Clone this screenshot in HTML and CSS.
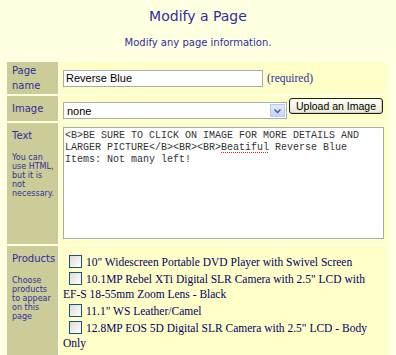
FILE: index.html
```html
<!DOCTYPE html>
<html>
<head>
<meta charset="utf-8">
<link rel="stylesheet" href="styles.css">
</head>
<body>
<h1 class="title">Modify a Page</h1>
<p class="subtitle">Modify any page information.</p>
<div class="form">
  <div class="label label-mid"><span class="lbl">Page name</span></div>
  <div class="cell row-name">
    <input class="text-input" type="text" value="Reverse Blue">
    <span class="req">(required)</span>
  </div>

  <div class="label label-mid"><span class="lbl">Image</span></div>
  <div class="cell row-image">
    <div class="select"><span class="select-val">none</span><span class="select-btn"><svg width="9" height="6" viewBox="0 0 9 6"><path d="M1.5 1.5 L4.5 4.5 L7.5 1.5" fill="none" stroke="#4d6185" stroke-width="1.5"/></svg></span></div>
    <button class="upload">Upload an Image</button>
  </div>

  <div class="label"><span class="lbl">Text</span><span class="help">You can use HTML, but it is not necessary.</span></div>
  <div class="cell row-text">
    <div class="textarea">&lt;B&gt;BE SURE TO CLICK ON IMAGE FOR MORE DETAILS AND LARGER PICTURE&lt;/B&gt;&lt;BR&gt;&lt;BR&gt;<span class="spell">Beatiful</span> Reverse Blue Items: Not many left!</div>
  </div>

  <div class="label"><span class="lbl">Products</span><span class="help">Choose products to appear on this page</span></div>
  <div class="cell row-products">
    <label class="item"><span class="cb"></span>10" Widescreen Portable DVD Player with Swivel Screen</label>
    <label class="item"><span class="cb"></span>10.1MP Rebel XTi Digital SLR Camera with 2.5" LCD with <span class="nw">EF-S</span> 18-55mm Zoom Lens - Black</label>
    <label class="item"><span class="cb"></span>11.1" WS Leather/Camel</label>
    <label class="item"><span class="cb"></span>12.8MP EOS 5D Digital SLR Camera with 2.5" LCD - Body Only</label>
  </div>
</div>
</body>
</html>
```
FILE: styles.css
```css
html, body {
  margin: 0;
  padding: 0;
  background: #ffffe2;
  overflow: hidden;
}
body {
  font-family: Verdana, "DejaVu Sans", sans-serif;
  color: #333399;
}
.title {
  margin: 0;
  padding-top: 8px;
  height: 20px;
  font-size: 14px;
  font-weight: normal;
  text-align: center;
  color: #2e2e9e;
}
.subtitle {
  margin: 0;
  padding-top: 9px;
  height: 25px;
  font-size: 10px;
  text-align: center;
  color: #2e2e9e;
}
.form {
  margin-left: 7px;
  width: 381px;
  display: grid;
  grid-template-columns: 51px 328px;
  grid-template-rows: 32px 25px 121px 120px;
  gap: 2px;
}
.label {
  background: #cccc99;
  padding: 7px 1px 0 5px;
  display: flex;
  flex-direction: column;
}
.label-mid {
  padding-top: 0;
  justify-content: center;
}
.lbl {
  font-size: 10px;
  line-height: 12px;
  color: #2e2e9e;
}
.label-mid .lbl {
  line-height: 15px;
}
.help {
  font-size: 8px;
  line-height: 9px;
  margin-top: 11px;
  color: #2e2e9e;
}
.cell {
  background: #ffffc8;
  padding-left: 3px;
}
.row-name {
  display: flex;
  align-items: center;
  gap: 4px;
}
.text-input {
  box-sizing: border-box;
  width: 200px;
  height: 17px;
  border: 1px solid #a5acb2;
  background: #fff;
  font-family: Arial, "Liberation Sans", sans-serif;
  font-size: 11px;
  padding: 0 2px;
  color: #000;
  margin: 0;
}
.req {
  font-family: "Times New Roman", "Liberation Serif", serif;
  font-size: 11.5px;
  color: #2e2e9e;
}
.row-image {
  display: flex;
  align-items: flex-start;
  gap: 2px;
}
.select {
  box-sizing: border-box;
  width: 224px;
  height: 17px;
  margin-top: 6px;
  border: 1px solid #a5acb2;
  background: #fff;
  display: flex;
  align-items: center;
  justify-content: space-between;
  font-family: Arial, "Liberation Sans", sans-serif;
  font-size: 11px;
  color: #000;
}
.select-val {
  padding-left: 3px;
}
.select-btn {
  width: 15px;
  height: 13px;
  margin-right: 1px;
  border: 1px solid #b9c9ef;
  box-sizing: border-box;
  background: linear-gradient(#e3ebfd, #c1d3fb);
  display: flex;
  align-items: center;
  justify-content: center;
}
.upload {
  box-sizing: border-box;
  width: 94px;
  height: 16px;
  margin-top: 2px;
  padding: 0;
  border: 1px solid #1c1c1c;
  border-radius: 3px;
  background: linear-gradient(#fffff6, #ece9d8);
  font-family: Arial, "Liberation Sans", sans-serif;
  font-size: 10.5px;
  color: #000;
  box-shadow: inset -1px -1px 0 #d6d0b5;
}
.row-text {
  padding-top: 4px;
}
.textarea {
  box-sizing: border-box;
  width: 321px;
  height: 112px;
  border: 1px solid #a5acb2;
  background: #fff;
  font-family: "Courier New", "Liberation Mono", monospace;
  font-size: 10px;
  line-height: 12px;
  color: #333;
  padding: 2px 1px;
  word-wrap: break-word;
}
.spell {
  text-decoration: underline dotted #e02020;
  text-underline-offset: 2px;
}
.row-products {
  padding-top: 9px;
  font-family: "Times New Roman", "Liberation Serif", serif;
  font-size: 11.5px;
  line-height: 15px;
  color: #000066;
}
.item {
  display: block;
  margin-bottom: 2px;
}
.nw {
  white-space: nowrap;
}
.cb {
  display: inline-block;
  box-sizing: border-box;
  width: 13px;
  height: 13px;
  border: 1px solid #1c5180;
  background: linear-gradient(135deg, #dcdcd7, #fff);
  vertical-align: -2px;
  margin: 0 4px 0 6px;
}
```
